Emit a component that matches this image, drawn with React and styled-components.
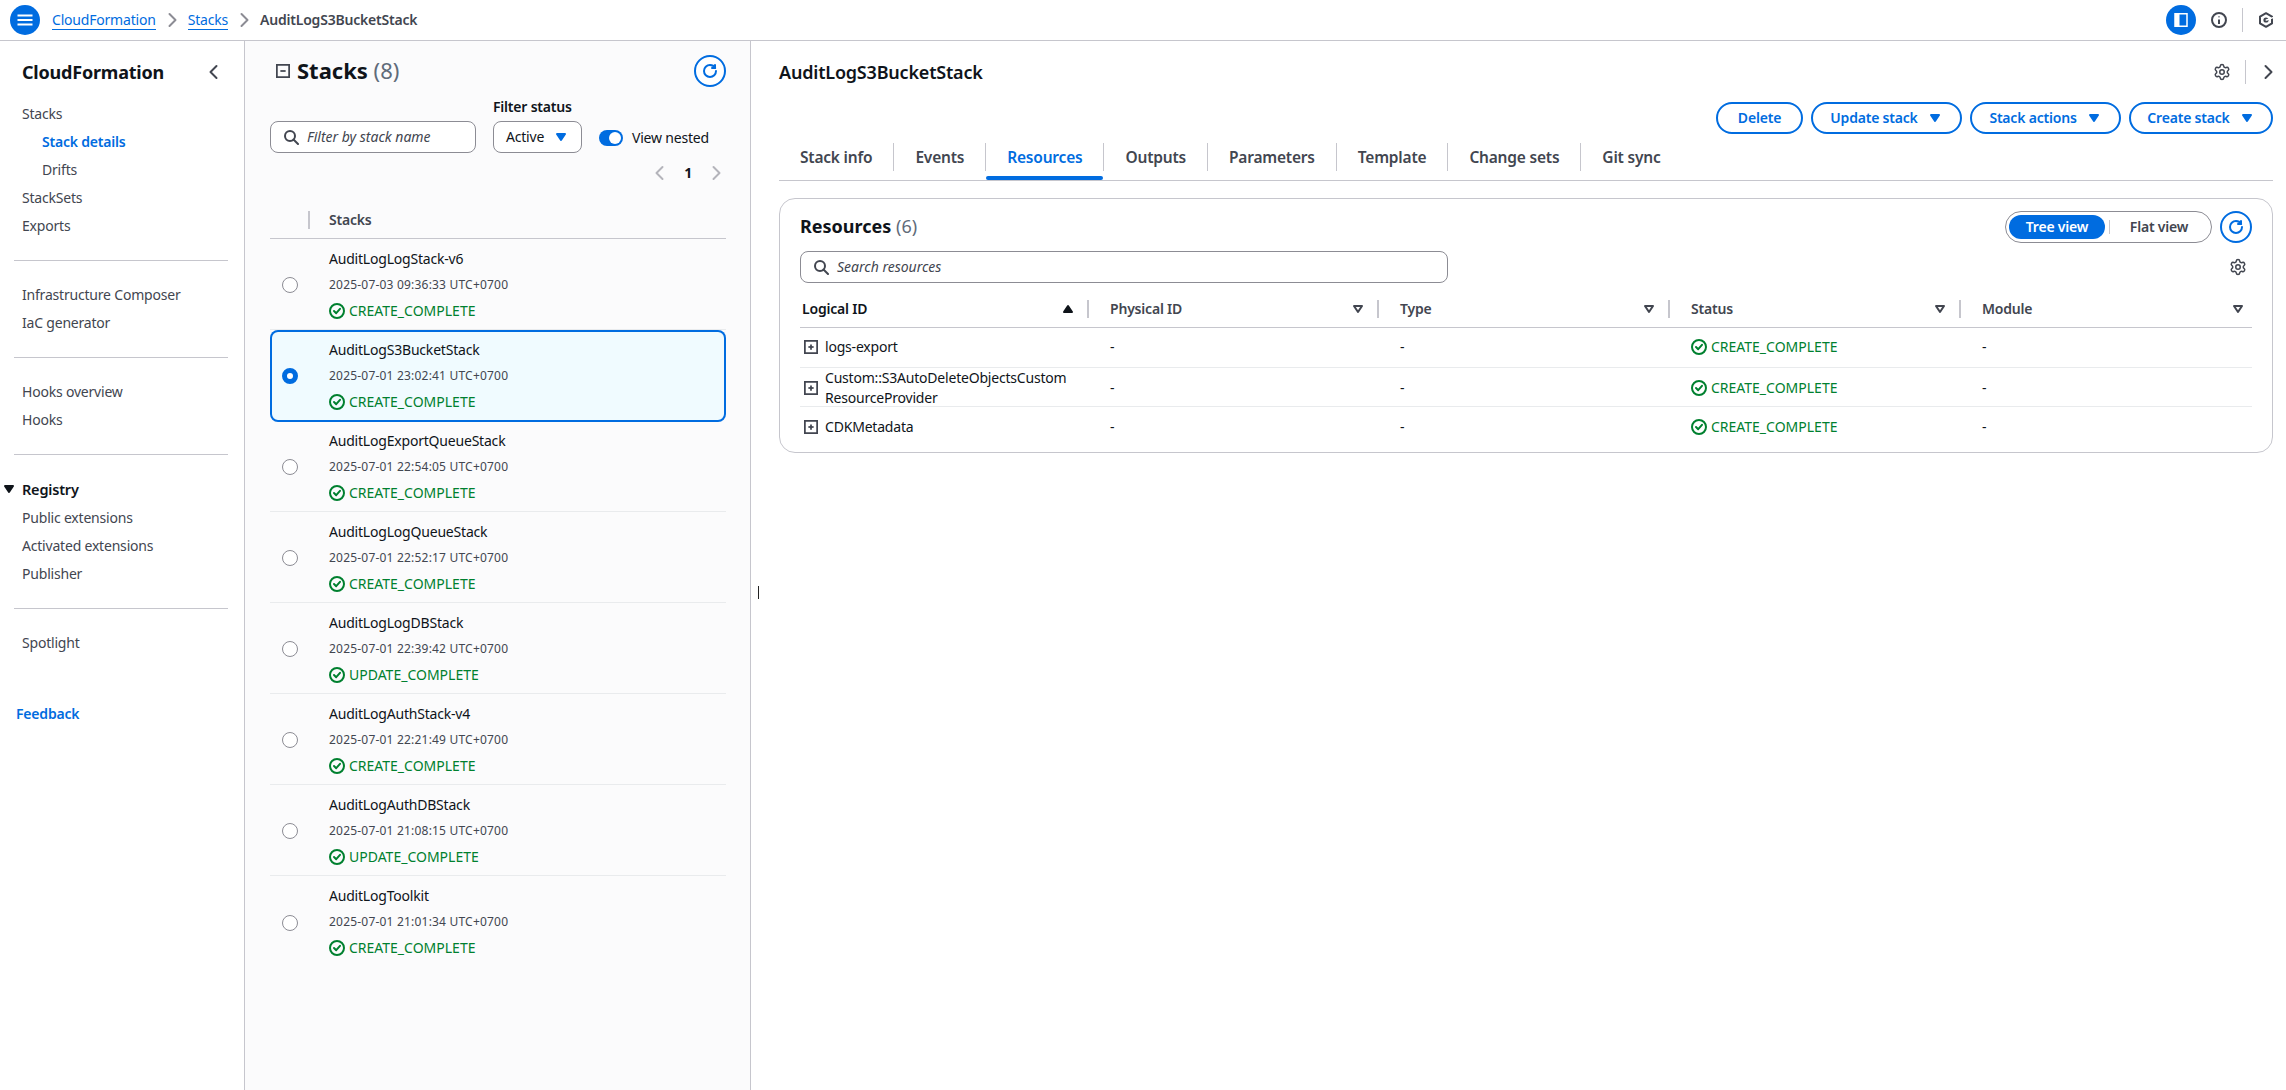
import React from "react";
import styled, { createGlobalStyle } from "styled-components";
import { Settings } from "lucide-react";

const BLUE = "#006ce0";
const INK = "#0f141a";
const SLATE = "#424650";
const LINE = "#c6c6cd";
const GREEN = "#00802f";

const stacks = [
  { name: "AuditLogLogStack-v6", date: "2025-07-03 09:36:33 UTC+0700", status: "CREATE_COMPLETE" },
  { name: "AuditLogS3BucketStack", date: "2025-07-01 23:02:41 UTC+0700", status: "CREATE_COMPLETE", selected: true },
  { name: "AuditLogExportQueueStack", date: "2025-07-01 22:54:05 UTC+0700", status: "CREATE_COMPLETE" },
  { name: "AuditLogLogQueueStack", date: "2025-07-01 22:52:17 UTC+0700", status: "CREATE_COMPLETE" },
  { name: "AuditLogLogDBStack", date: "2025-07-01 22:39:42 UTC+0700", status: "UPDATE_COMPLETE" },
  { name: "AuditLogAuthStack-v4", date: "2025-07-01 22:21:49 UTC+0700", status: "CREATE_COMPLETE" },
  { name: "AuditLogAuthDBStack", date: "2025-07-01 21:08:15 UTC+0700", status: "UPDATE_COMPLETE" },
  { name: "AuditLogToolkit", date: "2025-07-01 21:01:34 UTC+0700", status: "CREATE_COMPLETE" },
];

const tabs = ["Stack info", "Events", "Resources", "Outputs", "Parameters", "Template", "Change sets", "Git sync"];

const columns = ["Logical ID", "Physical ID", "Type", "Status", "Module"];

const resources = [
  { id: ["logs-export"] },
  { id: ["Custom::S3AutoDeleteObjectsCustom", "ResourceProvider"] },
  { id: ["CDKMetadata"] },
];

const Icon = ({ size = 16, color = "currentColor", width = 2, children }) => (
  <svg
    width={size}
    height={size}
    viewBox="0 0 16 16"
    fill="none"
    stroke={color}
    strokeWidth={width}
    strokeLinecap="round"
    strokeLinejoin="round"
    style={{ flex: "none", display: "block" }}
  >
    {children}
  </svg>
);

const RefreshIcon = () => (
  <Icon color={BLUE}>
    <path d="M10 5h3V2" />
    <path d="M14 8c0 3.31-2.69 6-6 6s-6-2.69-6-6 2.69-6 6-6c2.22 0 4.15 1.21 5.19 3" />
  </Icon>
);

const SearchIcon = () => (
  <Icon color={SLATE}>
    <circle cx="7" cy="7" r="5" />
    <path d="m15 15-4.5-4.5" />
  </Icon>
);

const CheckIcon = () => (
  <Icon color={GREEN}>
    <circle cx="8" cy="8" r="7" />
    <path d="m5 8 2.2 2.2L11 5.8" />
  </Icon>
);

const SquareIcon = ({ plus }) => (
  <Icon size={14} color={SLATE}>
    <path strokeLinecap="butt" strokeLinejoin="miter" d="M1 1h14v14H1z" />
    <path d="M5 8h6" strokeLinecap="butt" />
    {plus && <path d="M8 5v6" strokeLinecap="butt" />}
  </Icon>
);

const Caret = ({ color = BLUE, up, open, size = 16 }) => (
  <Icon size={size} color={color}>
    <path
      d={up ? "M4 11h8L8 5z" : "M4 5h8l-4 6z"}
      fill={open ? "none" : color}
    />
  </Icon>
);

const Chevron = ({ left, color = SLATE, size = 16 }) => (
  <Icon size={size} color={color}>
    <path d={left ? "M10.5 2 4.5 8l6 6" : "M5.5 2l6 6-6 6"} />
  </Icon>
);

const GearIcon = () => <Settings size={18} color={SLATE} strokeWidth={2} style={{ flex: "none", display: "block" }} />;

const App = () => {
  return (
    <>
      <GlobalStyle />
      <Page>
        <TopBar>
          <RoundButton>
            <Icon color="#fff">
              <path d="M.5 3.5h15M.5 8h15M.5 12.5h15" strokeLinecap="butt" />
            </Icon>
          </RoundButton>
          <Crumbs>
            <CrumbLink>CloudFormation</CrumbLink>
            <Chevron color="#8c8c94" />
            <CrumbLink>Stacks</CrumbLink>
            <Chevron color="#8c8c94" />
            <CrumbCurrent>AuditLogS3BucketStack</CrumbCurrent>
          </Crumbs>
          <TopTools>
            <RoundButton>
              <Icon color="#fff" width={1.5}>
                <path strokeLinecap="butt" strokeLinejoin="miter" d="M2 1.7h12v12.6H2z" />
                <path stroke="none" fill="#fff" d="M2 2h4.5v12H2z" />
              </Icon>
            </RoundButton>
            <ToolSlot>
              <Icon color={SLATE}>
                <circle cx="8" cy="8" r="7" />
                <path d="M8 7.5V12M8 4.4v.8" strokeLinecap="butt" />
              </Icon>
            </ToolSlot>
            <VRule />
            <ToolSlot $end>
              <Icon color={SLATE}>
                <path d="M8 1.2 14 4.6v6.8l-6 3.4-6-3.4V4.6z" strokeLinejoin="round" />
                <circle cx="8" cy="8" r="1.6" />
                <path d="M8.6 8 15 5.6" stroke="#fff" strokeWidth="1.4" />
              </Icon>
            </ToolSlot>
          </TopTools>
        </TopBar>

        <Columns>
          <Sidebar>
            <SideHeader>
              <SideTitle>CloudFormation</SideTitle>
              <Chevron left color={SLATE} />
            </SideHeader>
            <NavItem>Stacks</NavItem>
            <NavItem $sub $active>Stack details</NavItem>
            <NavItem $sub>Drifts</NavItem>
            <NavItem>StackSets</NavItem>
            <NavItem>Exports</NavItem>
            <SideRule />
            <NavItem>Infrastructure Composer</NavItem>
            <NavItem>IaC generator</NavItem>
            <SideRule />
            <NavItem>Hooks overview</NavItem>
            <NavItem>Hooks</NavItem>
            <SideRule />
            <NavGroup>
              <GroupCaret>
                <Caret color={INK} />
              </GroupCaret>
              Registry
            </NavGroup>
            <NavItem>Public extensions</NavItem>
            <NavItem>Activated extensions</NavItem>
            <NavItem>Publisher</NavItem>
            <SideRule />
            <NavItem>Spotlight</NavItem>
            <Feedback>Feedback</Feedback>
          </Sidebar>

          <StackPanel>
            <TitleRow>
              <TitleGroup>
                <SquareIcon />
                <PanelTitle>
                  Stacks <Count>(8)</Count>
                </PanelTitle>
              </TitleGroup>
              <CircleButton>
                <RefreshIcon />
              </CircleButton>
            </TitleRow>
            <FilterRow>
              <SearchBox $width={206}>
                <SearchIcon />
                <Placeholder>Filter by stack name</Placeholder>
              </SearchBox>
              <FilterField>
                <FieldLabel>Filter status</FieldLabel>
                <Select>
                  Active
                  <Caret />
                </Select>
              </FilterField>
              <ToggleField>
                <Toggle />
                View nested
              </ToggleField>
            </FilterRow>
            <Pager>
              <Chevron left color="#b4b4bb" />
              <PageNumber>1</PageNumber>
              <Chevron color="#b4b4bb" />
            </Pager>
            <StackHead>
              <HeadRule />
              <HeadLabel>Stacks</HeadLabel>
            </StackHead>
            {stacks.map((stack) => (
              <StackRow key={stack.name} $selected={stack.selected}>
                <Radio $selected={stack.selected} />
                <StackText>
                  <StackName>{stack.name}</StackName>
                  <StackDate>{stack.date}</StackDate>
                  <Status>
                    <CheckIcon />
                    {stack.status}
                  </Status>
                </StackText>
              </StackRow>
            ))}
          </StackPanel>

          <Detail>
            <TextCursor />
            <DetailHead>
              <DetailTitle>AuditLogS3BucketStack</DetailTitle>
              <HeadTools>
                <GearIcon />
                <VRule />
                <Chevron />
              </HeadTools>
            </DetailHead>
            <Actions>
              <ActionButton $width={87}>Delete</ActionButton>
              <ActionButton $width={151}>
                Update stack
                <Caret />
              </ActionButton>
              <ActionButton $width={151}>
                Stack actions
                <Caret />
              </ActionButton>
              <ActionButton $width={144}>
                Create stack
                <Caret />
              </ActionButton>
            </Actions>
            <TabBar>
              {tabs.map((tab, i) => (
                <Tab key={tab} $active={tab === "Resources"} $last={i === tabs.length - 1}>
                  {tab}
                </Tab>
              ))}
            </TabBar>
            <Card>
              <CardHead>
                <CardTitle>
                  Resources <Count>(6)</Count>
                </CardTitle>
                <CardTools>
                  <Segment>
                    <SegmentOn>Tree view</SegmentOn>
                    <SegmentRule />
                    <SegmentOff>Flat view</SegmentOff>
                  </Segment>
                  <CircleButton>
                    <RefreshIcon />
                  </CircleButton>
                </CardTools>
              </CardHead>
              <SearchRow>
                <SearchBox $width={648}>
                  <SearchIcon />
                  <Placeholder>Search resources</Placeholder>
                </SearchBox>
                <GearSlot>
                  <GearIcon />
                </GearSlot>
              </SearchRow>
              <TableHead>
                {columns.map((col, i) => (
                  <HeadCell key={col} $first={i === 0} $last={i === columns.length - 1}>
                    <HeadText $sorted={i === 0}>{col}</HeadText>
                    <Caret color={i === 0 ? INK : SLATE} up={i === 0} open={i !== 0} />
                    {i < columns.length - 1 && <HeadRule />}
                  </HeadCell>
                ))}
              </TableHead>
              {resources.map((res, i) => (
                <TableRow key={res.id[0]} $last={i === resources.length - 1}>
                  <IdCell>
                    <SquareIcon plus />
                    <span>
                      {res.id.map((part) => (
                        <IdLine key={part}>{part}</IdLine>
                      ))}
                    </span>
                  </IdCell>
                  <BodyCell>-</BodyCell>
                  <BodyCell>-</BodyCell>
                  <BodyCell>
                    <Status>
                      <CheckIcon />
                      CREATE_COMPLETE
                    </Status>
                  </BodyCell>
                  <BodyCell>-</BodyCell>
                </TableRow>
              ))}
            </Card>
          </Detail>
        </Columns>
      </Page>
    </>
  );
};

export default App;

const GlobalStyle = createGlobalStyle`
  html, body {
    margin: 0;
    padding: 0;
    background: #fff;
  }
  body {
    font-family: "Noto Sans", "Open Sans", sans-serif;
    font-size: 14px;
    line-height: 20px;
    letter-spacing: -0.2px;
    color: ${INK};
  }
  * {
    box-sizing: border-box;
  }
`;

const Page = styled.div`
  height: 1090px;
  display: flex;
  flex-direction: column;
  overflow: hidden;
`;

const TopBar = styled.div`
  height: 41px;
  flex: none;
  display: flex;
  align-items: center;
  padding: 0 0 0 10px;
  border-bottom: 1px solid ${LINE};
`;

const RoundButton = styled.div`
  width: 30px;
  height: 30px;
  border-radius: 50%;
  background: ${BLUE};
  display: flex;
  align-items: center;
  justify-content: center;
`;

const Crumbs = styled.div`
  display: flex;
  align-items: center;
  gap: 8px;
  margin-left: 12px;
`;

const CrumbLink = styled.span`
  color: ${BLUE};
  border-bottom: 1px solid ${BLUE};
  line-height: 19px;
`;

const CrumbCurrent = styled.span`
  color: ${SLATE};
  font-weight: 600;
`;

const TopTools = styled.div`
  margin-left: auto;
  display: flex;
  align-items: center;
`;

const ToolSlot = styled.div`
  width: ${(props) => (props.$end ? "43px" : "46px")};
  padding-left: ${(props) => (props.$end ? "3px" : "0")};
  display: flex;
  justify-content: center;
`;

const VRule = styled.div`
  width: 1px;
  height: 24px;
  background: ${LINE};
`;

const Columns = styled.div`
  flex: 1;
  display: grid;
  grid-template-columns: 245px 506px 1fr;
  min-height: 0;
`;

const Sidebar = styled.nav`
  border-right: 1px solid ${LINE};
  padding: 0 16px 0 0;
`;

const SideHeader = styled.div`
  height: 59px;
  padding: 3px 6px 0 22px;
  display: flex;
  align-items: center;
  justify-content: space-between;
`;

const SideTitle = styled.div`
  font-size: 18px;
  font-weight: 700;
`;

const NavItem = styled.div`
  height: 28px;
  line-height: 28px;
  padding-left: ${(props) => (props.$sub ? "42px" : "22px")};
  color: ${(props) => (props.$active ? BLUE : SLATE)};
  font-weight: ${(props) => (props.$active ? 600 : 400)};
  white-space: nowrap;
`;

const SideRule = styled.div`
  height: 1px;
  margin: 20px 0 20px 14px;
  background: ${LINE};
`;

const NavGroup = styled.div`
  position: relative;
  height: 29px;
  margin-top: 3px;
  line-height: 28px;
  padding-left: 22px;
  font-size: 14.5px;
  font-weight: 600;
`;

const GroupCaret = styled.span`
  position: absolute;
  left: 1px;
  top: 6px;
`;

const Feedback = styled.div`
  margin: 43px 0 0 16px;
  line-height: 28px;
  color: ${BLUE};
  font-weight: 600;
`;

const StackPanel = styled.section`
  background: #fbfbfc;
  border-right: 1px solid ${LINE};
  padding: 14px 24px 0 25px;
`;

const TitleRow = styled.div`
  height: 32px;
  display: flex;
  align-items: center;
  justify-content: space-between;
`;

const TitleGroup = styled.div`
  display: flex;
  align-items: center;
  gap: 7px;
  padding-left: 6px;
`;

const PanelTitle = styled.h2`
  margin: 0 0 3px;
  font-size: 22px;
  line-height: 30px;
  font-weight: 700;
  letter-spacing: 0;
`;

const Count = styled.span`
  font-weight: 400;
  color: #5f6b7a;
`;

const CircleButton = styled.div`
  width: 32px;
  height: 32px;
  border: 2px solid ${BLUE};
  border-radius: 50%;
  background: #fff;
  display: flex;
  align-items: center;
  justify-content: center;
`;

const FilterRow = styled.div`
  display: flex;
  align-items: flex-end;
  margin-top: 9px;
`;

const SearchBox = styled.div`
  width: ${(props) => props.$width}px;
  height: 32px;
  flex: none;
  border: 1px solid #8c8c94;
  border-radius: 8px;
  background: #fff;
  display: flex;
  align-items: center;
  gap: 8px;
  padding: 0 12px;
`;

const Placeholder = styled.span`
  font-style: italic;
  letter-spacing: 0;
  color: ${SLATE};
`;

const FilterField = styled.div`
  margin-left: 17px;
  width: 89px;
`;

const FieldLabel = styled.div`
  font-weight: 600;
  line-height: 22px;
  margin-bottom: 3px;
  white-space: nowrap;
`;

const Select = styled.div`
  height: 32px;
  border: 1px solid #8c8c94;
  border-radius: 8px;
  background: #fff;
  display: flex;
  align-items: center;
  justify-content: space-between;
  padding: 0 12px;
`;

const ToggleField = styled.div`
  display: flex;
  align-items: center;
  gap: 9px;
  margin: 0 0 5px 17px;
  white-space: nowrap;
`;

const Toggle = styled.span`
  position: relative;
  width: 24px;
  height: 16px;
  border-radius: 8px;
  background: ${BLUE};
  &::after {
    content: "";
    position: absolute;
    top: 2px;
    right: 2px;
    width: 12px;
    height: 12px;
    border-radius: 50%;
    background: #fff;
  }
`;

const Pager = styled.div`
  height: 24px;
  margin-top: 8px;
  padding-right: 2px;
  display: flex;
  align-items: center;
  justify-content: flex-end;
  gap: 16px;
`;

const PageNumber = styled.span`
  font-weight: 700;
`;

const StackHead = styled.div`
  height: 37px;
  margin-top: 17px;
  padding-left: 38px;
  display: flex;
  align-items: center;
  gap: 19px;
  border-bottom: 1px solid ${LINE};
`;

const HeadRule = styled.span`
  width: 2px;
  height: 18px;
  flex: none;
  background: ${LINE};
`;

const HeadLabel = styled.span`
  font-weight: 600;
  color: ${SLATE};
`;

const StackRow = styled.div`
  height: ${(props) => (props.$selected ? "92px" : "91px")};
  margin-bottom: ${(props) => (props.$selected ? "-1px" : "0")};
  padding: 7px 0 0 12px;
  display: flex;
  align-items: center;
  gap: 31px;
  border-radius: ${(props) => (props.$selected ? "8px" : "0")};
  background: ${(props) => (props.$selected ? "#f0fbff" : "transparent")};
  box-shadow: ${(props) => (props.$selected ? `inset 0 0 0 2px ${BLUE}` : "none")};
  border-bottom: ${(props) => (props.$selected ? "0" : "1px solid #e9ebed")};
  &:last-child {
    border-bottom: 0;
  }
`;

const Radio = styled.span`
  width: 16px;
  height: 16px;
  flex: none;
  border-radius: 50%;
  background: #fff;
  border: ${(props) => (props.$selected ? `5px solid ${BLUE}` : "1px solid #8c8c94")};
  margin-top: ${(props) => (props.$selected ? "-7px" : "-5px")};
`;

const StackText = styled.div`
  align-self: flex-start;
`;

const StackName = styled.div`
  height: 26px;
  line-height: 26px;
`;

const StackDate = styled.div`
  height: 26px;
  line-height: 26px;
  font-size: 12px;
  letter-spacing: 0.2px;
  color: ${SLATE};
`;

const Status = styled.div`
  height: 26px;
  display: flex;
  align-items: center;
  gap: 4px;
  letter-spacing: 0;
  color: ${GREEN};
`;

const Detail = styled.main`
  position: relative;
  padding: 19px 13px 0 28px;
`;

const TextCursor = styled.span`
  position: absolute;
  left: 7px;
  top: 545px;
  width: 1px;
  height: 13px;
  background: #222;
`;

const DetailHead = styled.div`
  height: 24px;
  display: flex;
  align-items: center;
  justify-content: space-between;
`;

const DetailTitle = styled.h1`
  margin: 0;
  font-size: 18px;
  font-weight: 600;
`;

const HeadTools = styled.div`
  display: flex;
  align-items: center;
  gap: 14px;
  margin-right: -3px;
`;

const Actions = styled.div`
  margin-top: 18px;
  display: flex;
  justify-content: flex-end;
  gap: 8px;
`;

const ActionButton = styled.div`
  width: ${(props) => props.$width}px;
  height: 32px;
  border: 2px solid ${BLUE};
  border-radius: 16px;
  background: #fff;
  color: ${BLUE};
  font-weight: 600;
  display: flex;
  align-items: center;
  justify-content: center;
  gap: 9px;
`;

const TabBar = styled.div`
  height: 38px;
  margin-top: 9px;
  display: flex;
  border-bottom: 1px solid ${LINE};
`;

const Tab = styled.div`
  position: relative;
  height: 28px;
  padding: 0 21px;
  font-size: 15.5px;
  line-height: 28px;
  font-weight: 600;
  color: ${(props) => (props.$active ? BLUE : SLATE)};
  border-right: ${(props) => (props.$last ? "0" : `1px solid ${LINE}`)};
  &::after {
    content: "";
    display: ${(props) => (props.$active ? "block" : "none")};
    position: absolute;
    left: 0;
    right: 0;
    top: 33px;
    height: 4px;
    border-radius: 2px;
    background: ${BLUE};
  }
`;

const Card = styled.section`
  margin-top: 17px;
  height: 255px;
  padding: 12px 20px 0;
  border: 1px solid ${LINE};
  border-radius: 16px;
`;

const CardHead = styled.div`
  height: 32px;
  display: flex;
  align-items: center;
  justify-content: space-between;
`;

const CardTitle = styled.h2`
  margin: 0 0 2px;
  font-size: 18px;
  font-weight: 700;
  letter-spacing: 0;
`;

const CardTools = styled.div`
  display: flex;
  align-items: center;
  gap: 8px;
`;

const Segment = styled.div`
  width: 207px;
  height: 32px;
  padding: 0 3px;
  border: 1px solid #8c8c94;
  border-radius: 16px;
  display: flex;
  align-items: center;
  font-weight: 600;
`;

const SegmentOn = styled.div`
  width: 96px;
  height: 24px;
  border-radius: 12px;
  background: ${BLUE};
  color: #fff;
  line-height: 24px;
  text-align: center;
`;

const SegmentRule = styled.span`
  width: 1px;
  height: 14px;
  margin-left: 4px;
  background: ${LINE};
`;

const SegmentOff = styled.div`
  flex: 1;
  color: ${SLATE};
  text-align: center;
`;

const SearchRow = styled.div`
  margin-top: 8px;
  display: flex;
  align-items: center;
  justify-content: space-between;
`;

const GearSlot = styled.div`
  margin-right: 5px;
`;

const gridColumns = "289px 290px 291px 291px 1fr";

const TableHead = styled.div`
  margin-top: 8px;
  height: 37px;
  display: grid;
  grid-template-columns: ${gridColumns};
  border-bottom: 1px solid ${LINE};
`;

const HeadCell = styled.div`
  display: flex;
  align-items: center;
  gap: 11px;
  padding-left: ${(props) => (props.$first ? "2px" : "21px")};
  padding-right: ${(props) => (props.$last ? "6px" : "0")};
`;

const HeadText = styled.span`
  flex: 1;
  font-weight: 600;
  color: ${(props) => (props.$sorted ? INK : SLATE)};
`;

const TableRow = styled.div`
  height: ${(props) => (props.$last ? "40px" : "39.5px")};
  display: grid;
  grid-template-columns: ${gridColumns};
  align-items: center;
  border-bottom: ${(props) => (props.$last ? "0" : "1px solid #e9ebed")};
`;

const IdCell = styled.div`
  display: flex;
  align-items: center;
  gap: 7px;
  padding-left: 4px;
`;

const IdLine = styled.div`
  white-space: nowrap;
`;

const BodyCell = styled.div`
  padding-left: 21px;
`;
